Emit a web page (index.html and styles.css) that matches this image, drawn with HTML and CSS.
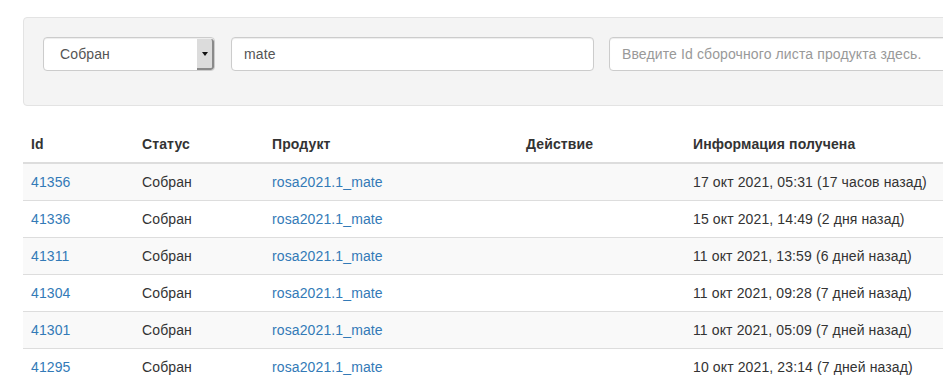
FILE: index.html
```html
<!DOCTYPE html>
<html lang="ru">
<head>
  <meta charset="UTF-8">
  <title>Сборочные листы</title>
  <link rel="stylesheet" href="styles.css">
</head>
<body>
<div class="container">
  <div class="well">
    <div class="filters">
      <div class="select-box">
        <span class="select-text">Собран</span>
        <span class="select-btn"><span class="caret"></span></span>
      </div>
      <input class="form-control product" type="text" value="mate">
      <input class="form-control list-id" type="text" placeholder="Введите Id сборочного листа продукта здесь.">
    </div>
  </div>

  <table class="table">
    <thead>
      <tr>
        <th class="col-id">Id</th>
        <th class="col-status">Статус</th>
        <th class="col-product">Продукт</th>
        <th class="col-action">Действие</th>
        <th>Информация получена</th>
      </tr>
    </thead>
    <tbody>
      <tr>
        <td><a href="#">41356</a></td>
        <td>Собран</td>
        <td><a href="#">rosa2021.1_mate</a></td>
        <td></td>
        <td>17 окт 2021, 05:31 (17 часов назад)</td>
      </tr>
      <tr>
        <td><a href="#">41336</a></td>
        <td>Собран</td>
        <td><a href="#">rosa2021.1_mate</a></td>
        <td></td>
        <td>15 окт 2021, 14:49 (2 дня назад)</td>
      </tr>
      <tr>
        <td><a href="#">41311</a></td>
        <td>Собран</td>
        <td><a href="#">rosa2021.1_mate</a></td>
        <td></td>
        <td>11 окт 2021, 13:59 (6 дней назад)</td>
      </tr>
      <tr>
        <td><a href="#">41304</a></td>
        <td>Собран</td>
        <td><a href="#">rosa2021.1_mate</a></td>
        <td></td>
        <td>11 окт 2021, 09:28 (7 дней назад)</td>
      </tr>
      <tr>
        <td><a href="#">41301</a></td>
        <td>Собран</td>
        <td><a href="#">rosa2021.1_mate</a></td>
        <td></td>
        <td>11 окт 2021, 05:09 (7 дней назад)</td>
      </tr>
      <tr>
        <td><a href="#">41295</a></td>
        <td>Собран</td>
        <td><a href="#">rosa2021.1_mate</a></td>
        <td></td>
        <td>10 окт 2021, 23:14 (7 дней назад)</td>
      </tr>
    </tbody>
  </table>
</div>
</body>
</html>
```

FILE: styles.css
```css
html, body {
  margin: 0;
  padding: 0;
  overflow: hidden;
}
body {
  font-family: "Liberation Sans", Arial, sans-serif;
  font-size: 14px;
  line-height: 20px;
  letter-spacing: 0.12px;
  color: #333;
  background-color: #fff;
}
a {
  color: #337ab7;
  text-decoration: none;
}
.container {
  width: 1170px;
  padding: 17px 0 0 23px;
}
.well {
  background-color: #f4f4f4;
  border: 1px solid #e3e3e3;
  border-radius: 4px;
  padding: 19px 19px 34px;
  margin-bottom: 20px;
}
.filters {
  display: flex;
  gap: 16px;
}
.select-box {
  display: flex;
  width: 172px;
  height: 34px;
  box-sizing: border-box;
  border: 1px solid #ccc;
  border-radius: 4px;
  background-color: #fff;
  box-shadow: inset 0 1px 1px rgba(0, 0, 0, .075);
  overflow: hidden;
}
.select-text {
  flex: 1;
  padding: 6px 16px;
  color: #555;
}
.select-btn {
  width: 15px;
  margin: 1px 0 0;
  background-color: #dcdcdc;
  border-right: 2px solid #8a8a8a;
  border-bottom: 2px solid #8a8a8a;
  border-radius: 0 3px 3px 0;
  display: flex;
  align-items: center;
  justify-content: center;
}
.caret {
  width: 0;
  height: 0;
  border-left: 3px solid transparent;
  border-right: 3px solid transparent;
  border-top: 4px solid #111;
}
.form-control {
  height: 34px;
  box-sizing: border-box;
  padding: 6px 12px;
  font-family: inherit;
  font-size: 14px;
  line-height: 20px;
  letter-spacing: 0.12px;
  color: #555;
  background-color: #fff;
  border: 1px solid #ccc;
  border-radius: 4px;
  box-shadow: inset 0 1px 1px rgba(0, 0, 0, .075);
  outline: none;
}
.form-control::placeholder {
  color: #999;
}
.product {
  width: 363px;
}
.list-id {
  width: 363px;
  margin-left: -1px;
}
.table {
  width: 1170px;
  border-collapse: collapse;
  border-spacing: 0;
}
.table th,
.table td {
  padding: 8px;
  text-align: left;
  vertical-align: top;
}
.table th {
  font-weight: bold;
  border-bottom: 2px solid #ddd;
}
.table td {
  border-top: 1px solid #ddd;
}
.table tbody tr:nth-child(odd) {
  background-color: #f9f9f9;
}
.col-id {
  width: 95px;
}
.col-status {
  width: 114px;
}
.col-product {
  width: 238px;
}
.col-action {
  width: 151px;
}
```
